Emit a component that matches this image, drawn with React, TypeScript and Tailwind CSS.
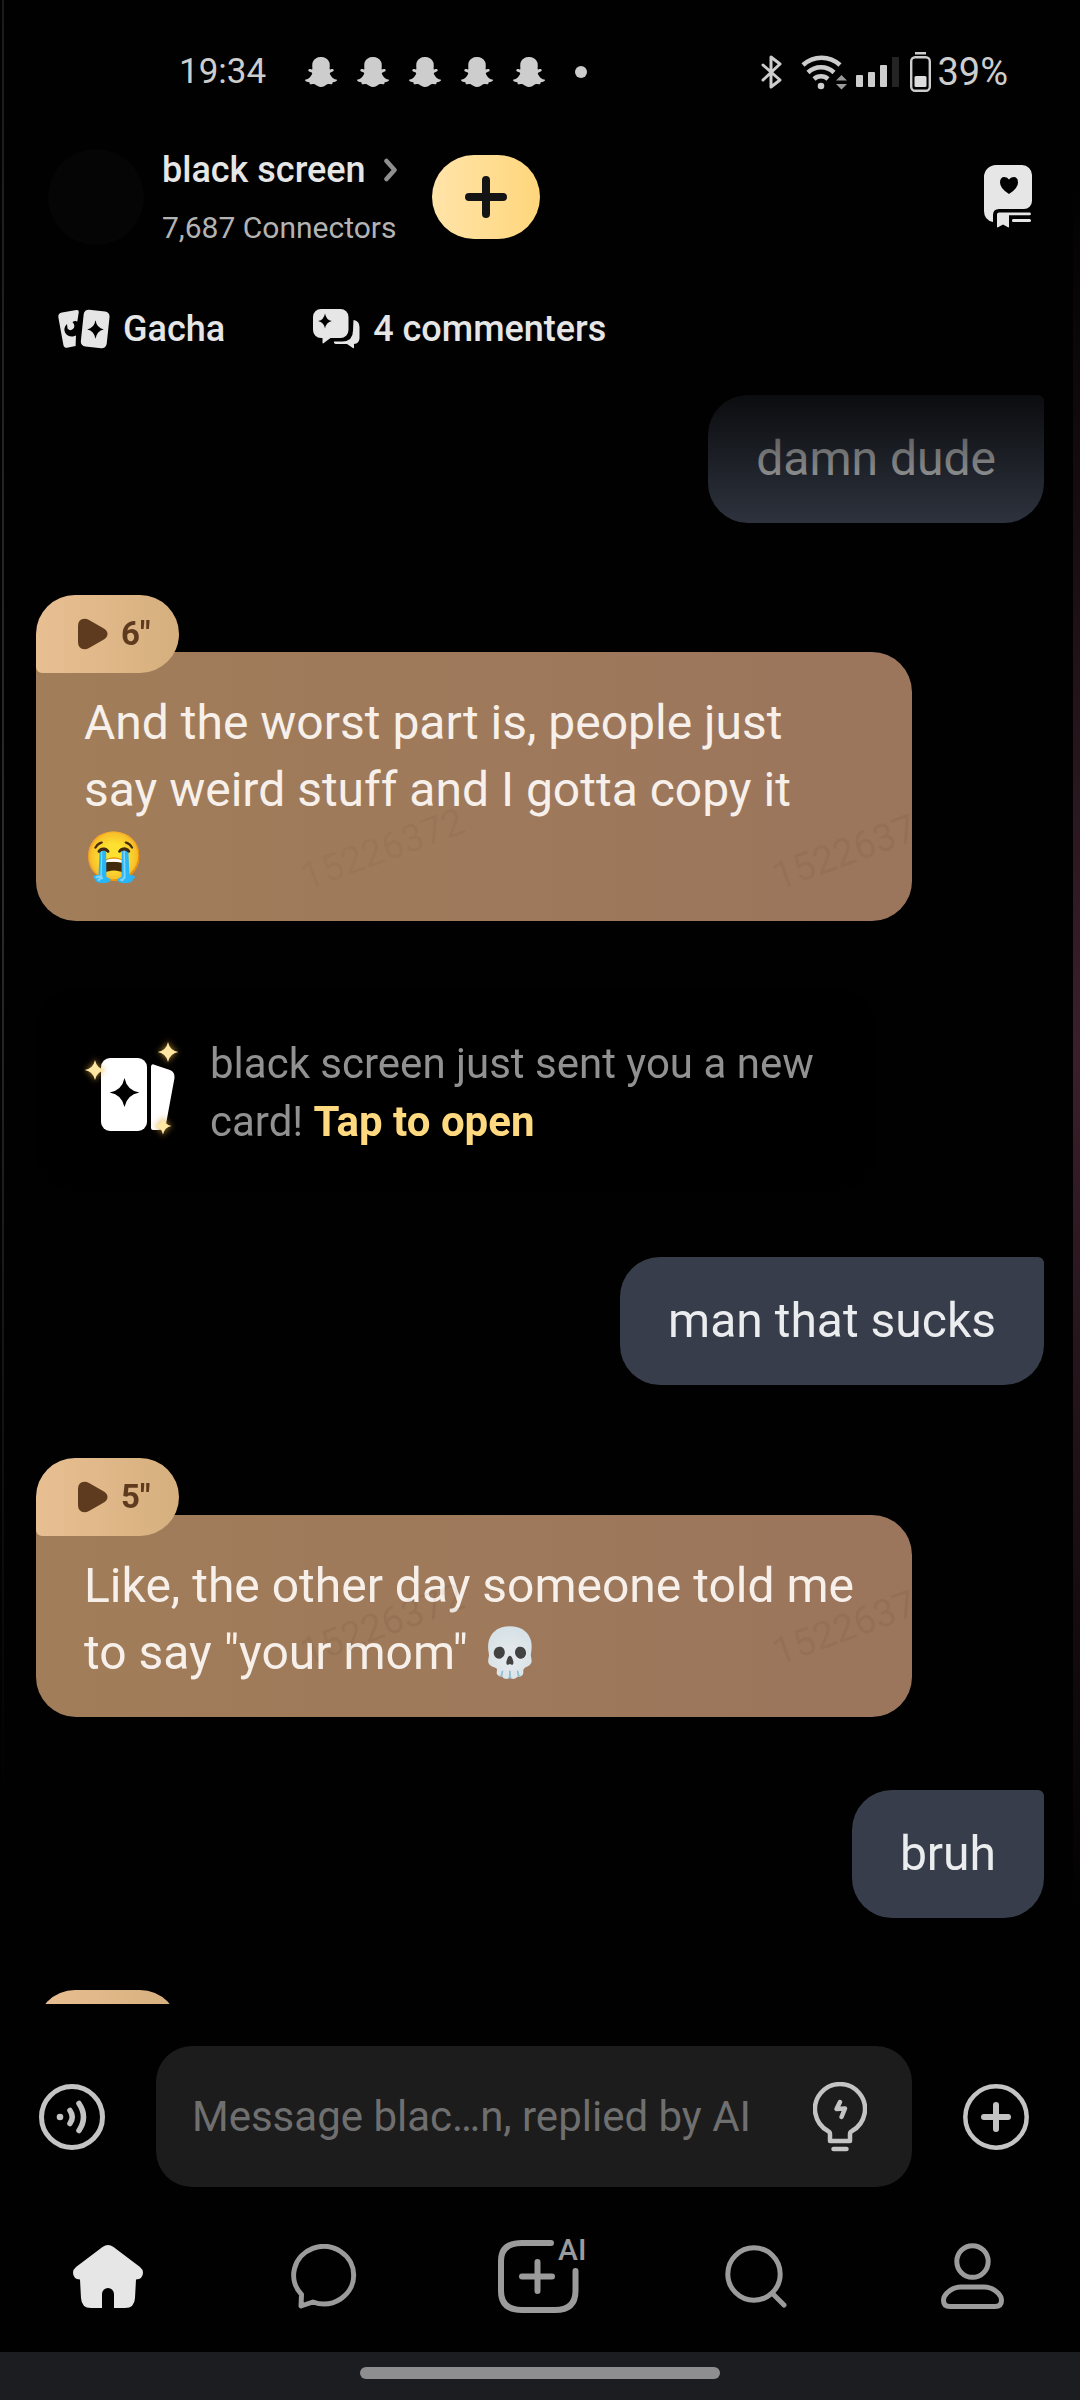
import { FaSnapchatGhost } from "react-icons/fa";

const STAR = "M0 -10Q1.500 -1.500 9 0Q1.500 1.500 0 10Q-1.500 1.500 -9 0Q-1.500 -1.500 0 -10Z";

function StatusBar() {
  return (
    <div className="flex h-[144px] shrink-0 items-center pr-[72px] pl-[179px] text-[#cdcdcd]">
      <span className="w-[126px] text-[35px]">19:34</span>
      <div className="flex items-center gap-5">
        {[0, 1, 2, 3, 4].map((i) => (
          <FaSnapchatGhost key={i} className="size-8" />
        ))}
      </div>
      <span className="ml-[30px] size-3 rounded-full bg-[#cdcdcd]" />
      <div className="ml-auto flex items-center">
        <svg width="21" height="34" viewBox="0 0 21 34" fill="none" stroke="currentColor" strokeWidth="3" strokeLinejoin="round" strokeLinecap="round">
          <path d="M2 10L19 25L10 32V2L19 9L2 25" />
        </svg>
        <svg className="ml-[19px]" width="46" height="35" viewBox="0 0 46 35" fill="none" stroke="currentColor" strokeWidth="4.500">
          <path d="M2 10A27 27 0 0 1 39 10M7 17.500A19 19 0 0 1 33 17.500M13 24A10.500 10.500 0 0 1 27 24" />
          <circle cx="20" cy="31" r="3.300" fill="currentColor" stroke="none" />
          <path d="M40.500 20L46 25.500H35ZM40.500 34.500L46 29H35Z" fill="#9a9a9a" stroke="none" />
        </svg>
        <svg className="ml-[9px]" width="44" height="32" viewBox="0 0 44 32" fill="currentColor">
          <rect x="0" y="19" width="7" height="12" rx="1" />
          <rect x="12" y="16" width="7" height="15" rx="1" />
          <rect x="24" y="9" width="7" height="22" rx="1" />
          <rect x="36" y="1" width="7" height="30" rx="1" fill="#242424" />
        </svg>
        <svg className="ml-[10px]" width="21" height="40" viewBox="0 0 21 40">
          <rect x="5" y="0" width="11" height="2.500" fill="currentColor" />
          <rect x="1.200" y="5.200" width="18.600" height="33.500" rx="4" fill="none" stroke="currentColor" strokeWidth="2.400" />
          <rect x="4.500" y="24" width="12" height="11" rx="1.500" fill="#dedede" />
        </svg>
        <span className="ml-[6px] text-[38px]">39%</span>
      </div>
    </div>
  );
}

function Header() {
  return (
    <header className="flex h-[106px] shrink-0 items-center pr-12 pl-12">
      <div className="size-24 rounded-full bg-[#050505]" />
      <div className="ml-[18px] flex flex-col gap-[14px]">
        <button type="button" className="flex h-12 items-center gap-[18px] text-[36px] leading-[48px] font-medium text-[#e6e6e6]">
          black screen
          <svg width="14" height="24" viewBox="0 0 14 24" fill="none" stroke="#8f8f8f" strokeWidth="4.500" strokeLinecap="round" strokeLinejoin="round">
            <path d="M2.500 3L10.500 12L2.500 21" />
          </svg>
        </button>
        <p className="text-[30px] leading-[40px] text-[#b3b3b3]">7,687 Connectors</p>
      </div>
      <button type="button" aria-label="Connect" className="ml-[34px] flex h-[84px] w-[108px] items-center justify-center rounded-full bg-linear-to-r from-[#ffe4a9] to-[#ffd67b]">
        <svg width="42" height="42" viewBox="0 0 42 42" stroke="#141414" strokeWidth="8" strokeLinecap="round">
          <path d="M4 21H38M21 4V38" />
        </svg>
      </button>
      <button type="button" aria-label="Favorites book" className="ml-auto text-[#e6e6e6]">
        <svg width="48" height="64" viewBox="0 0 48 64" fill="currentColor">
          <path d="M12 0H38a10 10 0 0 1 10 10V36a8 8 0 0 1-8 8H15q-6 0-6 6V57Q0 55 0 46V12A12 12 0 0 1 12 0Z" />
          <path d="M25 29Q16 23.500 16 17.500Q16 12 20.500 12Q23.500 12 25 14.500Q26.500 12 29.500 12Q34 12 34 17.500Q34 23.500 25 29Z" fill="#000" />
          <path d="M15 47.500H45.500a1.300 1.300 0 0 1 0 2.800H25V61.500q0 1.500-1.500.500L19 59.500L14.500 62Q13 63 13 61.500V49.500Q13 47.500 15 47.500Z" />
          <path d="M29 54H45.500a1.300 1.300 0 0 1 0 3H29q-1 0-1-1.500t1-1.500Z" />
        </svg>
      </button>
    </header>
  );
}

function Shortcuts() {
  return (
    <div className="flex h-[134px] shrink-0 items-center gap-[88px] pt-6 pl-[58px] text-[36px] font-medium text-[#e6e6e6]">
      <button type="button" className="flex items-center gap-[13px]">
        <svg width="52" height="40" viewBox="0 0 52 40" fill="currentColor">
          <path d="M4 3.500L18.500 1Q21 .700 20.800 3L19.300 12.500Q17 11.500 14.500 13Q18 17 15 20Q12 22.500 9.500 19.500L9 15Q5 19 7 23.500Q9.500 28 15 27.500L18 26.500L17.600 37L9 38.800Q6 39 5.400 36L.300 8Q0 4.300 4 3.500Z" />
          <rect x="-12.800" y="-18.500" width="26" height="37" rx="5" transform="translate(37 20) rotate(6)" />
          <path d={STAR} transform="translate(37.500 20.500) scale(.92)" fill="#000" />
        </svg>
        Gacha
      </button>
      <button type="button" className="flex items-center gap-[13px]">
        <svg width="47" height="40" viewBox="0 0 47 40" fill="currentColor">
          <path d="M8 0H27.500a8 8 0 0 1 8 8V21a8 8 0 0 1-8 8H17.500L10.500 34.300Q9.500 34.800 9.500 33.500V29H8A8 8 0 0 1 0 21V8A8 8 0 0 1 8 0Z" />
          <path d={STAR} transform="translate(12 12) scale(.76)" fill="#000" />
          <path d="M40.500 11Q46.500 12 46.500 18V29Q46.500 34.500 41 35V38.500Q41 39.800 39.900 39L34 35H23Q20.500 34.500 21 32.500H29.500Q40 32 40 21.500Z" />
        </svg>
        4 commenters
      </button>
    </div>
  );
}

function UserMessage({ text }: { text: string }) {
  return (
    <div className="self-end rounded-tl-[40px] rounded-tr-[6px] rounded-b-[40px] bg-[#373d4a] px-12 pt-[30px] pb-[31px] text-[48px] leading-[67px] text-[#ebecee]">
      {text}
    </div>
  );
}

function VoiceTag({ seconds }: { seconds: number }) {
  return (
    <button type="button" className="relative z-10 -mb-[21px] flex h-[78px] w-[143px] items-center gap-[13px] rounded-t-[39px] rounded-br-[39px] rounded-bl-[6px] bg-linear-to-r from-[#e8bf92] to-[#d6af7e] pl-[42px] text-[33px] font-bold text-[#5e3b1f]">
      <svg width="30" height="32" viewBox="0 0 30 32" fill="currentColor">
        <path d="M0 8Q0 1 6.500 .700Q8.500 .600 11 2L25 10Q29.500 12.500 29.500 16T25 22L11 30Q8.500 31.400 6.500 31.300Q0 31 0 24Z" />
      </svg>
      {seconds}"
    </button>
  );
}

function BotMessage({ seconds, text, tall = false }: { seconds: number; text?: string; tall?: boolean }) {
  const mark = tall ? "top-[176px]" : "top-[88px]";
  return (
    <div className="flex w-full flex-col items-start pr-[132px]">
      <VoiceTag seconds={seconds} />
      {text && (
        <div className="relative w-full overflow-hidden rounded-r-[40px] rounded-bl-[40px] bg-linear-to-r from-[#a17d59] to-[#9b755c] px-12 pt-[37px] pb-[31px]">
          <p className="pr-2 text-[48px] leading-[67px] text-[#f7f0ea]">{text}</p>
          <span aria-hidden="true" className={`absolute left-[261px] ${mark} -rotate-20 text-[38px] leading-[42px] text-black/5`}>15226372</span>
          <span aria-hidden="true" className={`absolute left-[733px] ${mark} -rotate-20 text-[38px] leading-[42px] text-black/5`}>15226372</span>
        </div>
      )}
    </div>
  );
}

function CardNotice() {
  return (
    <div className="mt-[67px] mr-[168px] mb-[66px] flex h-[203px] items-center rounded-[40px] bg-black pl-[46px]">
      <svg className="shrink-0" width="104" height="108" viewBox="0 0 104 108">
        <defs>
          <filter id="glow" x="-60%" y="-60%" width="220%" height="220%">
            <feGaussianBlur stdDeviation="3" />
          </filter>
        </defs>
        <path d="M69 31Q69 27 73 29L88 34Q93 36 92.500 42L84 88Q82 94 76 94H71Q69 94 69 92Z" fill="#fff" />
        <rect x="19" y="22" width="46" height="73" rx="9" fill="#fff" />
        <path d={STAR} transform="translate(42.500 56.500) scale(1.650 1.450)" fill="#000" />
        <g fill="#d9a441" filter="url(#glow)" opacity=".7">
          <path d={STAR} transform="translate(86 16) scale(1.200)" />
          <path d={STAR} transform="translate(13 34) scale(1.200)" />
          <path d={STAR} transform="translate(81 90) scale(1.100)" />
        </g>
        <g fill="#ffe6a3">
          <path d={STAR} transform="translate(86 16) scale(1.150 1)" />
          <path d={STAR} transform="translate(13 34) scale(1.150 1)" />
          <path d={STAR} transform="translate(81 90) scale(.950 .850)" />
        </g>
      </svg>
      <p className="ml-[24px] pt-[6px] text-[42px] leading-[58px] text-[#919191]">
        black screen just sent you a new card!{" "}
        <button type="button" className="font-bold text-[#ffd97f]">Tap to open</button>
      </p>
    </div>
  );
}

function Composer() {
  return (
    <div className="flex shrink-0 items-center gap-[51px] pt-[42px] pr-[51px] pb-[13px] pl-[39px] text-[#c4c4c4]">
      <button type="button" aria-label="Voice message">
        <svg width="66" height="66" viewBox="0 0 66 66" fill="none" stroke="currentColor" strokeWidth="5" strokeLinecap="round">
          <circle cx="33" cy="33" r="30.500" />
          <circle cx="21" cy="33" r="3.300" fill="currentColor" stroke="none" />
          <path d="M31 26.500Q35.500 33 31 39.500M40 19.500Q49 33 40 46.500" strokeWidth="5.500" />
        </svg>
      </button>
      <div className="flex h-[141px] min-w-0 flex-1 items-center rounded-[36px] bg-[#1c1c1c] pr-[45px] pl-9">
        <input
          type="text"
          aria-label="Message"
          placeholder="Message blac…n, replied by AI"
          className="h-full min-w-0 flex-1 bg-transparent text-[42px] text-[#e6e6e6] outline-none placeholder:text-[#6f6f6f]"
        />
        <button type="button" aria-label="Suggestions">
          <svg width="54" height="70" viewBox="0 0 54 70" fill="none" stroke="currentColor" strokeWidth="4.500" strokeLinecap="round" strokeLinejoin="round">
            <path d="M17 59V52Q17 50 15 49A25 25 0 1 1 39 49Q37 50 37 52V59Z" />
            <path d="M20.500 67H33.500M27 20L23.500 27L32 26.500L28.500 35" />
          </svg>
        </button>
      </div>
      <button type="button" aria-label="More">
        <svg width="66" height="66" viewBox="0 0 66 66" fill="none" stroke="currentColor" strokeWidth="4.500" strokeLinecap="round">
          <circle cx="33" cy="33" r="30.700" />
          <path d="M21 33H45M33 21V45" strokeWidth="6" />
        </svg>
      </button>
    </div>
  );
}

function BottomNav() {
  return (
    <nav className="grid h-[152px] shrink-0 grid-cols-5 place-items-center text-[#9b9b9b]">
      <a href="#home" aria-label="Home" className="text-[#e6e6e6]">
        <svg width="70" height="63" viewBox="0 0 70 63" fill="currentColor">
          <path d="M29.500 2Q35 -2 40.500 2L67 22Q70 24.500 70 27.500Q70 34 63 34.500L62 53Q61.500 63 52 63H41V49a6 6 0 0 0-12 0V63H18Q8.500 63 8 53L7 34.500Q0 34 0 27.500Q0 24.500 3 22Z" />
        </svg>
      </a>
      <a href="#chats" aria-label="Chats">
        <svg width="66" height="65" viewBox="0 0 66 65" fill="none" stroke="currentColor" strokeWidth="5" strokeLinejoin="round">
          <path d="M22 58L10 62L10.500 50.500A30 28.700 0 1 1 22 58Z" />
        </svg>
      </a>
      <a href="#create" aria-label="Create with AI" className="relative">
        <svg width="84" height="73" viewBox="0 0 84 73" fill="none" stroke="currentColor" strokeWidth="6" strokeLinecap="round">
          <path d="M53 3H24Q3 3 3 21V51Q3 70 24 70H57Q77.500 70 77.500 51V31M24 36.500H54M39.500 22V51" />
        </svg>
        <span className="absolute -top-2 left-[60px] text-[30px] leading-[36px] font-medium">AI</span>
      </a>
      <a href="#search" aria-label="Search">
        <svg width="62" height="63" viewBox="0 0 62 63" fill="none" stroke="currentColor" strokeWidth="5" strokeLinecap="round">
          <circle cx="29" cy="29" r="26.200" />
          <path d="M48 49L59 60" />
        </svg>
      </a>
      <a href="#profile" aria-label="Profile">
        <svg width="63" height="67" viewBox="0 0 63 67" fill="none" stroke="currentColor" strokeWidth="5">
          <ellipse cx="31.500" cy="18.500" rx="15.700" ry="15.800" />
          <path d="M20 44H43Q51 44 57 50Q60.500 53.500 60.500 57.500Q60.500 63.500 54 63.500H9Q2.500 63.500 2.500 57.500Q2.500 53.500 6 50Q12 44 20 44Z" />
        </svg>
      </a>
    </nav>
  );
}

export default function App() {
  return (
    <div className="relative flex h-screen flex-col overflow-hidden bg-[#010101] font-[Roboto,sans-serif]">
      <div aria-hidden="true" className="pointer-events-none absolute top-0 left-[2px] h-[1800px] w-[2px] bg-linear-to-b from-[#1c1a1a] via-[#2c2a2c] to-transparent" />
      <div aria-hidden="true" className="pointer-events-none absolute top-[180px] right-0 h-[1740px] w-[7px] bg-linear-to-b from-transparent via-[#3a1f2a] to-transparent" />
      <StatusBar />
      <Header />
      <Shortcuts />
      <main className="flex min-h-0 flex-1 flex-col overflow-hidden mask-[linear-gradient(to_bottom,rgba(0,0,0,0.15),#000_176px)] pt-[11px] pr-9 pl-9">
        <div className="flex flex-col">
          <UserMessage text="damn dude" />
          <div className="h-[72px]" />
          <BotMessage seconds={6} text="And the worst part is, people just say weird stuff and I gotta copy it 😭" tall />
          <CardNotice />
          <UserMessage text="man that sucks" />
          <div className="h-[73px]" />
          <BotMessage seconds={5} text={'Like, the other day someone told me to say "your mom" 💀'} />
          <div className="h-[73px]" />
          <UserMessage text="bruh" />
          <div className="h-[72px]" />
          <BotMessage seconds={4} />
        </div>
      </main>
      <Composer />
      <BottomNav />
      <div className="flex h-12 shrink-0 justify-center bg-[#1c1d21] pt-[15px]">
        <div className="h-3 w-1/3 rounded-full bg-[#8e8e90]" />
      </div>
    </div>
  );
}
